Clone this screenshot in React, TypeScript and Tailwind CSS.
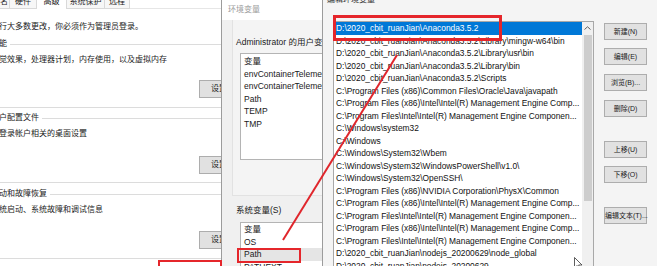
import React from "react"

const rightRows = [
  "D:\\2020_cbit_ruanJian\\Anaconda3.5.2",
  "D:\\2020_cbit_ruanJian\\Anaconda3.5.2\\Library\\mingw-w64\\bin",
  "D:\\2020_cbit_ruanJian\\Anaconda3.5.2\\Library\\usr\\bin",
  "D:\\2020_cbit_ruanJian\\Anaconda3.5.2\\Library\\bin",
  "D:\\2020_cbit_ruanJian\\Anaconda3.5.2\\Scripts",
  "C:\\Program Files (x86)\\Common Files\\Oracle\\Java\\javapath",
  "C:\\Program Files (x86)\\Intel\\Intel(R) Management Engine Comp...",
  "C:\\Program Files\\Intel\\Intel(R) Management Engine Componen...",
  "C:\\Windows\\system32",
  "C:\\Windows",
  "C:\\Windows\\System32\\Wbem",
  "C:\\Windows\\System32\\WindowsPowerShell\\v1.0\\",
  "C:\\Windows\\System32\\OpenSSH\\",
  "C:\\Program Files (x86)\\NVIDIA Corporation\\PhysX\\Common",
  "C:\\Program Files (x86)\\Intel\\Intel(R) Management Engine Comp...",
  "C:\\Program Files\\Intel\\Intel(R) Management Engine Componen...",
  "C:\\Program Files (x86)\\Intel\\Intel(R) Management Engine Comp...",
  "C:\\Program Files\\Intel\\Intel(R) Management Engine Componen...",
  "D:\\2020_cbit_ruanJian\\nodejs_20200629\\node_global",
  "D:\\2020_cbit_ruanJian\\nodejs_20200629",
]

const userVars = ["envContainerTelemetryApi", "envContainerTelemetryVersion", "Path", "TEMP", "TMP"]

function SettingsButton() {
  return (
    <div className="ml-[200px] w-[75px] h-[18px] bg-[#e1e1e1] border border-[#adadad] text-[8px] leading-[16px] pl-[11px] text-[#222] whitespace-nowrap">
      设置(S)...
    </div>
  )
}

function GroupLabel({ text }: { text: string }) {
  return (
    <div className="h-[12px] flex items-center gap-[3px] text-[8px] leading-[12px] text-[#222]">
      <span className="whitespace-nowrap">{text}</span>
      <div className="flex-1 h-px bg-[#dcdcdc]" />
    </div>
  )
}

function Desc({ text }: { text: string }) {
  return <p className="h-[12px] text-[8px] leading-[12px] text-[#222] whitespace-nowrap">{text}</p>
}

function SideButton({ label, className = "" }: { label: string; className?: string }) {
  return (
    <div className={"h-[17px] bg-[#e1e1e1] border border-[#adadad] text-[7px] leading-[15px] text-center text-[#222] whitespace-nowrap " + className}>
      {label}
    </div>
  )
}

export default function App() {
  return (
    <div className="w-[657px] h-[266px] relative overflow-hidden flex bg-white font-['Liberation_Sans','Noto_Sans_CJK_SC',sans-serif]">
      {/* system properties, advanced tab */}
      <div className="w-[221px] h-full shrink-0 overflow-hidden bg-white">
        <div className="-mt-[5px] h-[14px] flex text-[8px] leading-[14px] text-[#222]">
          <div className="w-[10px] border-r border-b border-[#d9d9d9] bg-[#f7f7f7]">名</div>
          <div className="w-[27px] border-r border-b border-[#d9d9d9] bg-[#f7f7f7] text-center">硬件</div>
          <div className="w-[30px] border-r border-[#d9d9d9] bg-white text-center">高级</div>
          <div className="w-[38px] border-r border-b border-[#d9d9d9] bg-[#f7f7f7] text-center">系统保护</div>
          <div className="w-[25px] border-r border-b border-[#d9d9d9] bg-[#f7f7f7] text-center">远程</div>
          <div className="flex-1 border-b border-[#e6e6e6]" />
        </div>
        <div className="pt-[12px] -ml-[1px]">
          <Desc text="行大多数更改，你必须作为管理员登录。" />
          <div className="mt-[5px] border-b border-[#dcdcdc] pb-[9px]">
            <GroupLabel text="能" />
            <div className="mt-[4px]"><Desc text="觉效果，处理器计划，内存使用，以及虚拟内存" /></div>
            <div className="mt-[14px]"><SettingsButton /></div>
          </div>
          <div className="mt-[4px] border-b border-[#dcdcdc] pb-[8px]">
            <GroupLabel text="户配置文件" />
            <div className="mt-[4px]"><Desc text="登录帐户相关的桌面设置" /></div>
            <div className="mt-[16px]"><SettingsButton /></div>
          </div>
          <div className="mt-[5px] border-b border-[#dcdcdc] pb-[9px]">
            <GroupLabel text="动和故障恢复" />
            <div className="mt-[4px]"><Desc text="统启动、系统故障和调试信息" /></div>
            <div className="mt-[15px]"><SettingsButton /></div>
          </div>
        </div>
      </div>

      {/* environment variables */}
      <div className="w-[101px] h-full shrink-0 overflow-hidden bg-[#f0f0f0] border-l border-[#9c9c9c] flex flex-col">
        <div className="h-[20px] shrink-0 bg-white text-[8px] leading-[20px] pl-[6px] text-[#9a9a9a] whitespace-nowrap">环境变量</div>
        <div className="ml-[10px] h-[176px] shrink-0 border-l border-b border-[#e2e2e2] bg-[#f4f4f4] pt-[16px] pl-[3px]">
          <p className="h-[12px] text-[8.5px] leading-[12px] text-[#1a1a1a] whitespace-nowrap">Administrator 的用户变量(U)</p>
          <div className="mt-[5px] ml-[4px] w-[120px] h-[107px] bg-white border border-[#b4b4b4] pt-[1px] text-[8.5px] text-[#1a1a1a]">
            <div className="h-[12.5px] leading-[12.5px] pl-[3px] whitespace-nowrap">变量</div>
            {userVars.map((v) => (
              <div key={v} className="h-[12.5px] leading-[12.5px] pl-[3px] whitespace-nowrap">{v}</div>
            ))}
          </div>
        </div>
        <p className="mt-[8px] shrink-0 pl-[14px] h-[12px] text-[8.5px] leading-[12px] text-[#1a1a1a] whitespace-nowrap">系统变量(S)</p>
        <div className="mt-[6px] ml-[18px] w-[120px] h-[60px] shrink-0 bg-white border border-[#b4b4b4] text-[8.5px] text-[#1a1a1a]">
          <div className="h-[12.5px] leading-[12.5px] pl-[3px]">变量</div>
          <div className="h-[12.5px] leading-[12.5px] pl-[3px]">OS</div>
          <div className="h-[12.5px] leading-[12.5px] pl-[3px] bg-[#e5e5e5]">Path</div>
          <div className="h-[12.5px] leading-[12.5px] pl-[3px]">PATHEXT</div>
        </div>
      </div>

      {/* edit environment variable */}
      <div className="flex-1 h-full bg-[#f4f4f4] border-l border-[#9c9c9c] overflow-hidden flex flex-col">
        <div className="h-[10px] shrink-0">
          <p className="-mt-[6px] leading-[12px] text-[8px] pl-[4px] text-[#333] whitespace-nowrap">编辑环境变量</p>
        </div>
        <div className="flex flex-1">
          <div className="ml-[10px] mt-[11px] w-[261px] border border-[#a8a8a8] bg-white flex self-start">
            <div className="flex-1 text-[8.4px] text-[#111] overflow-hidden">
              {rightRows.map((r, i) => (
                <div
                  key={i}
                  className={
                    "h-[12.5px] leading-[12.5px] pl-[2px] whitespace-nowrap overflow-hidden " +
                    (i === 0 ? "bg-[#0078d7] text-white" : "")
                  }
                >
                  {r}
                </div>
              ))}
            </div>
            <div className="w-[11px] bg-[#f0f0f0] flex flex-col items-center">
              <div className="h-[12px] w-full flex items-center justify-center">
                <svg width="7" height="4" viewBox="0 0 7 4">
                  <path d="M0.5 3.5 L3.5 0.8 L6.5 3.5" fill="none" stroke="#606060" strokeWidth="1" />
                </svg>
              </div>
              <div className="mt-[1px] w-[8px] h-[166px] bg-[#cdcdcd]" />
            </div>
          </div>
          <div className="ml-[10px] mt-[13px] w-[43px] flex flex-col">
            <SideButton label="新建(N)" />
            <SideButton label="编辑(E)" className="mt-[8px]" />
            <SideButton label="浏览(B)..." className="mt-[9px]" />
            <SideButton label="删除(D)" className="mt-[9px]" />
            <SideButton label="上移(U)" className="mt-[24px]" />
            <SideButton label="下移(O)" className="mt-[8px]" />
            <SideButton label="编辑文本(T)..." className="mt-[24px]" />
          </div>
        </div>
      </div>

      {/* annotations */}
      <svg className="absolute inset-0 pointer-events-none" width="657" height="266">
        <line x1="283" y1="240" x2="397" y2="55" stroke="#e0262c" strokeWidth="2" />
      </svg>
      <div className="absolute left-[333px] top-[15px] w-[169px] h-[26px] border-[3px] border-[#e5262b] pointer-events-none" />
      <div className="absolute left-[237px] top-[248px] w-[64px] h-[15px] border-2 border-[#e5262b] pointer-events-none" />
      <div className="absolute left-[158px] top-[260px] w-[64px] h-[12px] border-2 border-[#e5262b] pointer-events-none" />
      <svg className="absolute left-[574px] top-[257px] pointer-events-none" width="9" height="13" viewBox="0 0 9 13">
        <path d="M0.5 0.5 L0.5 11 L3 8.5 L5 12.5 L6.5 11.8 L4.6 8 L8 8 Z" fill="#fff" stroke="#333" strokeWidth="0.8" />
      </svg>
    </div>
  )
}
